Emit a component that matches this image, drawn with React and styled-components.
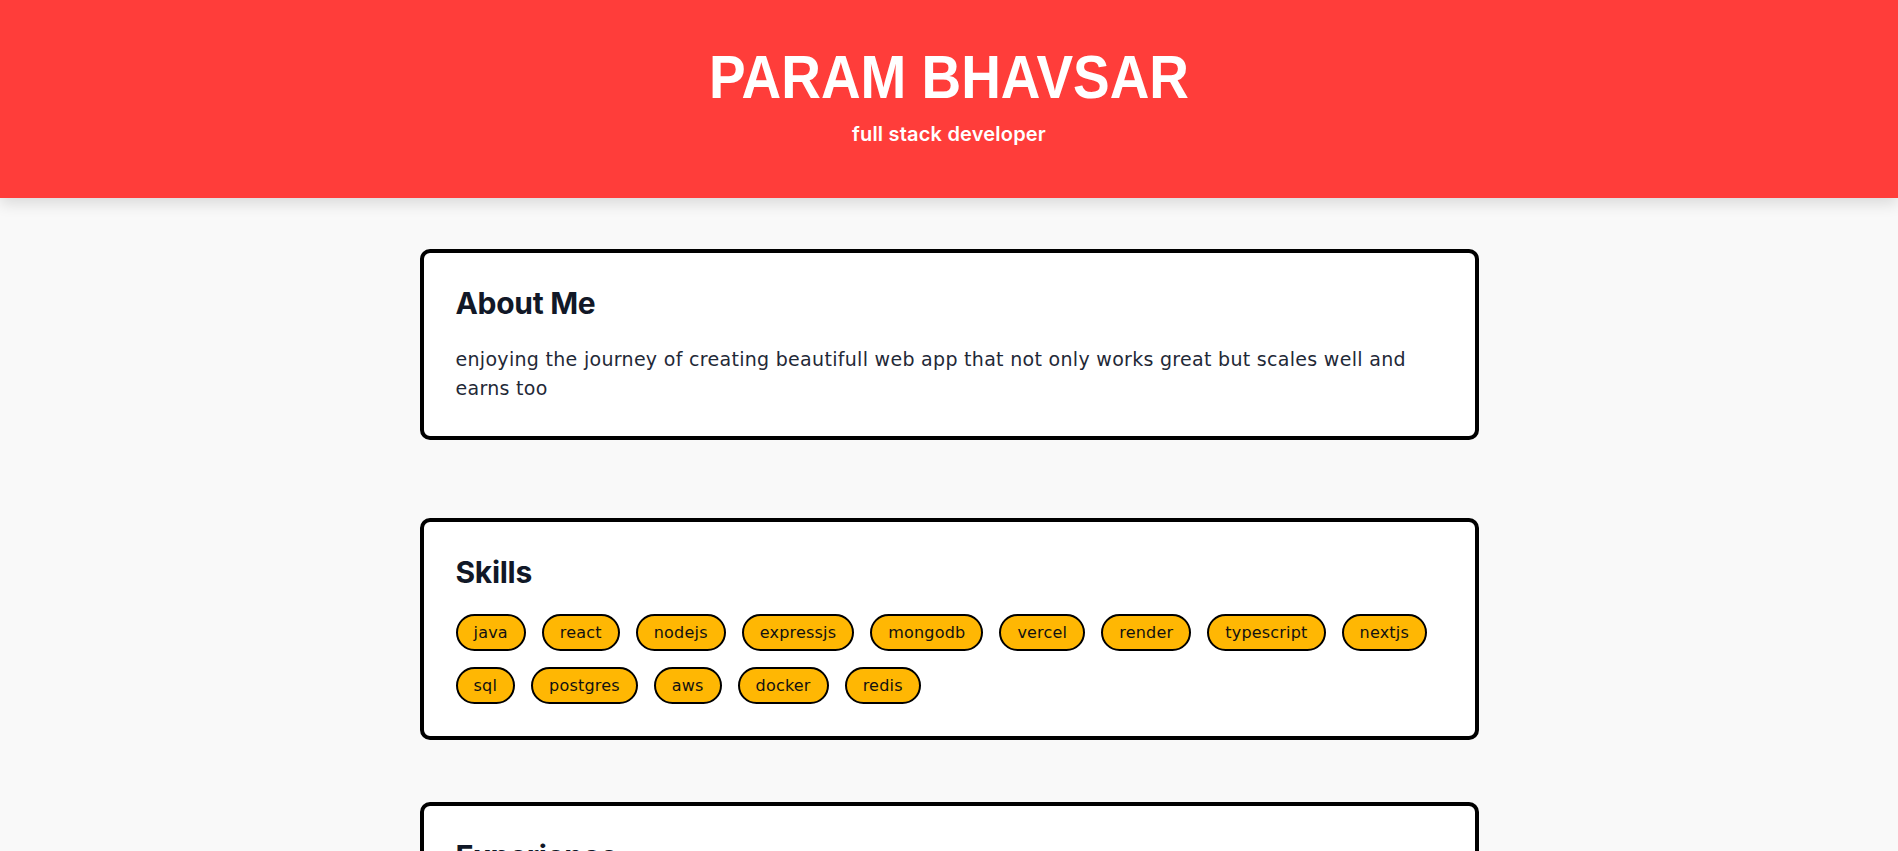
import React from "react";
import styled, { createGlobalStyle } from "styled-components";

const GlobalStyle = createGlobalStyle`
  body {
    margin: 0;
    background: #f9f9f9;
    font-family: "DejaVu Sans", "Liberation Sans", sans-serif;
  }
`;

const Header = styled.header`
  background: #ff3d3a;
  padding: 47px 0 48px;
  text-align: center;
  box-shadow: 0 6px 14px rgba(0, 0, 0, 0.12);
`;

const Name = styled.h1`
  margin: 0 0 12px;
  font-family: "Liberation Sans", Arial, sans-serif;
  font-size: 61px;
  line-height: 60px;
  font-weight: 700;
  color: #fff;
  transform: scaleX(0.9);
`;

const Tagline = styled.p`
  margin: 0;
  font-family: Inter, "Liberation Sans", sans-serif;
  font-size: 20px;
  font-weight: 600;
  letter-spacing: 0.2px;
  line-height: 31px;
  color: #fff;
`;

const Main = styled.main`
  max-width: 1059px;
  margin: 0 auto;
  padding-top: 51px;
`;

const Card = styled.section`
  background: #fff;
  border: 4px solid #000;
  border-radius: 10px;
  padding: 32px;
  margin-bottom: ${(p) => p.$gap || 64}px;
`;

const CardTitle = styled.h2`
  margin: 0 0 23px;
  font-family: Inter, "Liberation Sans", sans-serif;
  font-size: 30px;
  line-height: 37px;
  font-weight: 700;
  letter-spacing: -0.3px;
  color: #111827;
`;

const Text = styled.p`
  margin: 0;
  font-size: 19px;
  letter-spacing: 0.3px;
  line-height: 29.25px;
  color: #1f2937;
`;

const SkillList = styled.ul`
  display: flex;
  flex-wrap: wrap;
  gap: 16px;
  margin: 0;
  padding: 0;
  list-style: none;
`;

const Skill = styled.li`
  background: #ffb703;
  border: 2px solid #000;
  border-radius: 9999px;
  padding: 4px 16px;
  font-size: 16px;
  letter-spacing: 0.2px;
  line-height: 25px;
  color: #111;
`;

const skills = [
  "java",
  "react",
  "nodejs",
  "expressjs",
  "mongodb",
  "vercel",
  "render",
  "typescript",
  "nextjs",
  "sql",
  "postgres",
  "aws",
  "docker",
  "redis",
];

const App = () => {
  return (
    <>
      <GlobalStyle />
      <Header>
        <Name>PARAM BHAVSAR</Name>
        <Tagline>full stack developer</Tagline>
      </Header>
      <Main>
        <Card $gap={78}>
          <CardTitle>About Me</CardTitle>
          <Text>
            enjoying the journey of creating beautifull web app that not only
            works great but scales well and earns too
          </Text>
        </Card>
        <Card $gap={62}>
          <CardTitle>Skills</CardTitle>
          <SkillList>
            {skills.map((s) => (
              <Skill key={s}>{s}</Skill>
            ))}
          </SkillList>
        </Card>
        <Card>
          <CardTitle>Experience</CardTitle>
          <Text>full stack developer</Text>
        </Card>
      </Main>
    </>
  );
};

export default App;
